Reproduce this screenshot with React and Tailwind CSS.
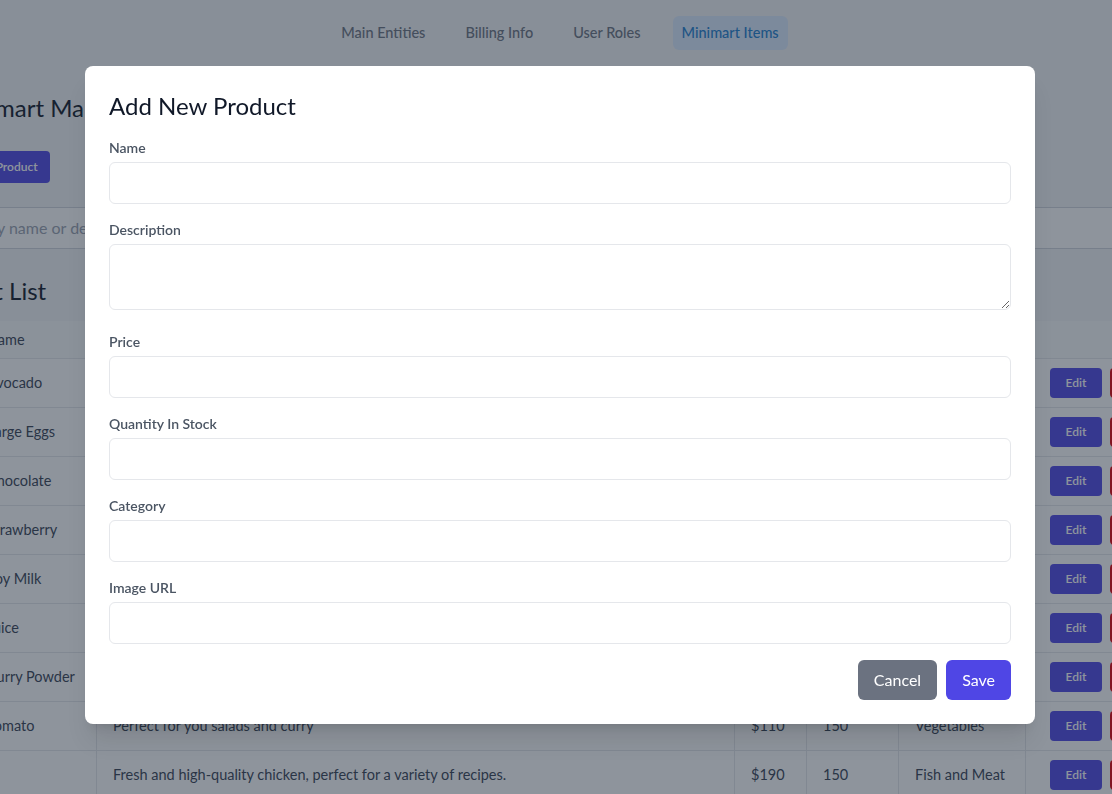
import React from 'react';

const tabs = ['Main Entities', 'Billing Info', 'User Roles', 'Minimart Items'];

const products = [
    { name: 'Avocado', desc: 'Creamy ripe avocados, great for toast and salads.', price: '$95', qty: 120, cat: 'Fruits' },
    { name: 'Large Eggs', desc: 'A dozen farm fresh large eggs.', price: '$140', qty: 200, cat: 'Dairy' },
    { name: 'Chocolate', desc: 'Rich dark chocolate bar.', price: '$60', qty: 90, cat: 'Snacks' },
    { name: 'Strawberry', desc: 'Sweet and juicy strawberries.', price: '$150', qty: 70, cat: 'Fruits' },
    { name: 'Soy Milk', desc: 'Fresh soy milk, 1 litre.', price: '$85', qty: 180, cat: 'Dairy' },
    { name: 'Juice', desc: 'Freshly squeezed orange juice.', price: '$120', qty: 60, cat: 'Beverages' },
    { name: 'Curry Powder', desc: 'Aromatic blend of spices for curries.', price: '$45', qty: 110, cat: 'Spices' },
    { name: 'Tomato', desc: 'Perfect for you salads and curry', price: '$110', qty: 150, cat: 'Vegetables' },
    { name: '', desc: 'Fresh and high-quality chicken, perfect for a variety of recipes.', price: '$190', qty: 150, cat: 'Fish and Meat' },
];

const fields = ['Name', 'Description', 'Price', 'Quantity In Stock', 'Category', 'Image URL'];

const AddProductModal = () => (
    <div className="fixed inset-0 z-50 bg-gray-800/50 flex justify-center items-start pt-[66px] pl-[8px]">
        <div className="bg-white w-[950px] rounded-lg shadow-xl p-6">
            <h2 className="text-2xl text-gray-900 mb-4">Add New Product</h2>

            {fields.map((f) => (
                <div key={f} className={f === 'Description' ? 'mb-[22px]' : 'mb-4'}>
                    <label className="block text-sm font-semibold text-[#4b5563] mb-1">{f}</label>
                    {f === 'Description' ? (
                        <textarea className="block w-full h-[66px] border border-gray-200 rounded-md px-3 py-2 text-base" />
                    ) : (
                        <input className="block w-full border border-gray-200 rounded-md px-3 py-2 text-base" />
                    )}
                </div>
            ))}

            {/* Footer */}
            <div className="flex justify-end gap-[9px]">
                <button className="bg-[#6b7280] text-white text-base px-4 py-2 rounded-md">Cancel</button>
                <button className="bg-[#4f46e5] text-white text-base px-4 py-2 rounded-md">Save</button>
            </div>
        </div>
    </div>
);

export default function App() {
    return (
        <div className="min-h-screen bg-gray-100 overflow-hidden font-['Lato',sans-serif] text-gray-900">
            {/* Top tabs */}
            <nav className="flex justify-center gap-6 py-4 pl-[9px]">
                {tabs.map((t) => (
                    <button
                        key={t}
                        className={
                            t === 'Minimart Items'
                                ? 'px-[9px] py-[7px] rounded-md text-[14.5px] leading-5 font-medium bg-blue-100 text-[#1d7fd0]'
                                : 'px-2 py-[7px] rounded-md text-[14.5px] leading-5 font-medium text-[#6b7280]'
                        }
                    >
                        {t}
                    </button>
                ))}
            </nav>

            <main className="-ml-[76px] w-[1300px]">
                <h1 className="text-2xl ml-[24px] mt-[26px] mb-[27px]">Minimart Management</h1>
                <button className="ml-[35px] bg-[#4f46e5] text-white text-xs font-semibold px-3 py-2 rounded">
                    Add Product
                </button>

                <input
                    placeholder="Search by name or description..."
                    className="block mt-6 w-full bg-white border border-gray-300 px-3 py-2 text-base placeholder-gray-400"
                />

                <h2 className="text-2xl mt-[26px] mb-[14px] -ml-[4px]">Product List</h2>

                <table className="ml-[46px] w-[1315px] table-fixed border-collapse bg-white text-[14.5px] leading-5 text-gray-700 whitespace-nowrap">
                    <colgroup>
                        <col className="w-[126px]" />
                        <col className="w-[638px]" />
                        <col className="w-[72px]" />
                        <col className="w-[92px]" />
                        <col className="w-[127px]" />
                        <col className="w-[260px]" />
                    </colgroup>
                    <thead className="bg-gray-50">
                        <tr className="border-b border-gray-200">
                            {['Name', 'Description', 'Price', 'Quantity', 'Category'].map((h) => (
                                <th key={h} className="text-left font-normal px-4 py-[8.5px] border-x border-gray-200">{h}</th>
                            ))}
                            <th className="text-center font-normal px-4 py-[8.5px] border-x border-gray-200">Actions</th>
                        </tr>
                    </thead>
                    <tbody>
                        {products.map((p, i) => (
                            <tr key={i} className="border-b border-gray-200">
                                <td className="px-4 py-[9px] border-x border-gray-200">{p.name}</td>
                                <td className="px-4 py-[9px] border-x border-gray-200">{p.desc}</td>
                                <td className="px-4 py-[9px] border-x border-gray-200">{p.price}</td>
                                <td className="px-4 py-[9px] border-x border-gray-200">{p.qty}</td>
                                <td className="px-4 py-[9px] border-x border-gray-200">{p.cat}</td>
                                <td className="px-6 py-[9px] border-x border-gray-200">
                                    <div className="flex gap-2">
                                        <button className="w-[52px] h-[30px] bg-[#4f46e5] text-white text-xs font-semibold rounded">Edit</button>
                                        <button className="px-3 h-[30px] bg-red-600 text-white text-xs font-semibold rounded">Delete</button>
                                    </div>
                                </td>
                            </tr>
                        ))}
                    </tbody>
                </table>
            </main>

            <AddProductModal />
        </div>
    );
}
